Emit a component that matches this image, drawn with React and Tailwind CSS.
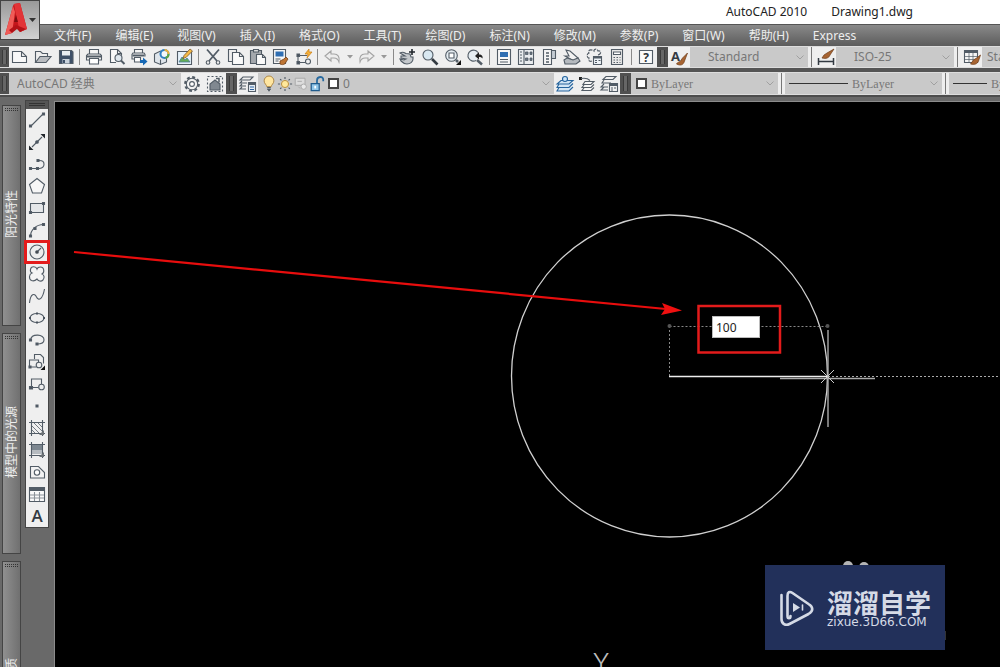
import { clsx } from "clsx";

const MENUS = [
  "文件(F)", "编辑(E)", "视图(V)", "插入(I)", "格式(O)", "工具(T)", "绘图(D)",
  "标注(N)", "修改(M)", "参数(P)", "窗口(W)", "帮助(H)", "Express",
];

// every icon is drawn on an 18 x 18 grid
const ICONS = {
  new: <path d="M1.5 3.5h9l5 5v6h-14zM10.5 3.5v5h5" fill="#f8f8f8" />,
  open: (
    <>
      <path d="M1.5 14.500v-11h5l2 2h5v3" fill="#eee" />
      <path d="M1.500 14.500l4.500-6h11l-5 6z" fill="#b9bcc0" />
    </>
  ),
  save: (
    <>
      <path d="M2.500 2.500h12l1.500 1.500v11.500h-13.500z" fill="#3e5068" />
      <path d="M5 3h8v4.500h-8z" fill="#e8edf2" stroke="none" />
      <path d="M5.500 11h7v4.500h-7z" fill="#c9d2dc" stroke="none" />
      <path d="M7 12v3" stroke="#3e5068" strokeWidth="2" />
    </>
  ),
  print: (
    <>
      <path d="M4.500 6v-4.500h9v4.500M4.500 12h-3v-4.500l1.500-1.500h12l1.500 1.500v4.500h-3" fill="#f5f5f5" />
      <path d="M4.500 10.500h9v5.500h-9z" fill="#fff" />
      <path d="M2 8.500h14" strokeWidth="2" />
    </>
  ),
  preview: (
    <>
      <path d="M8 14.500h-5.500v-13h7l4 4v2" fill="#f8f8f8" />
      <path d="M9.500 1.500v4h4" />
      <circle cx="10.500" cy="10" r="3.500" fill="#dfe7ee" />
      <path d="M13 12.500l3.500 3.500" strokeWidth="2" />
    </>
  ),
  publish: (
    <>
      <path d="M4.500 5v-3.500h8v3.500M4 11h-2v-4.500l1-1.500h11l1 1.500v2" fill="#f5f5f5" />
      <path d="M4.500 9.500h6v4.500h-6z" fill="#fff" />
      <path d="M2.500 7.500h12" strokeWidth="2" />
      <path d="M10 12h3v-2.500l4.500 4-4.500 4v-2.500h-3z" fill="#1769b5" stroke="none" />
    </>
  ),
  dwf: (
    <>
      <path d="M1.500 6l6-3 6 3v8l-6 2.500-6-2.500z" fill="#dfe5eb" />
      <path d="M7.500 16.500v-5" />
      <circle cx="11.500" cy="6" r="4" stroke="#2f7fc4" strokeWidth="2" fill="#f2f7fb" />
      <path d="M11.500 2a4 4 0 014 4" stroke="#efb23a" strokeWidth="2" />
      <path d="M15.500 6a4 4 0 01-3 4" stroke="#5ba746" strokeWidth="2" />
    </>
  ),
  sheet: (
    <>
      <path d="M1.500 3.500h14v13h-14z" fill="#e6f2fa" />
      <path d="M3 14l3-5 3 3 2-2 3 4z" fill="#62ad55" stroke="#4c7a9c" strokeWidth=".8" />
      <path d="M7 10.500l1-3 6-6.500 2.500 2-6.500 6.500z" fill="#f5ba45" stroke="#7a5629" strokeWidth=".8" />
    </>
  ),
  cut: (
    <>
      <path d="M3 1.500l10 11.500M15 1.500l-10 11.500" strokeWidth="1.800" />
      <circle cx="4" cy="14.500" r="1.800" />
      <circle cx="14" cy="14.500" r="1.800" />
    </>
  ),
  copy: (
    <>
      <path d="M1.500 13.500v-12h8v12z" fill="#eee" />
      <path d="M5.500 4.500h7l4 4v8h-11z" fill="#fafafa" />
      <path d="M12.500 4.500v4h4" />
    </>
  ),
  paste: (
    <>
      <path d="M1.500 2.500h11v13h-11z" fill="#a4a8ad" />
      <path d="M4.500 1.500h5v2.500h-5z" fill="#ddd" />
      <path d="M7.500 6.500h6l3 3v7h-9z" fill="#fafafa" />
      <path d="M13.500 6.500v3h3" />
    </>
  ),
  match: (
    <>
      <path d="M1.500 1.500h12v14h-12z" fill="#f7f7f7" />
      <path d="M3.500 3.500h8v5h-8z" fill="#2f6eb2" stroke="none" />
      <path d="M3.500 11h5M3.500 13h3" />
      <path d="M8 13l4-2 2-2 2 2-2 3c-1 3-4 3-6 2z" fill="#bd7433" stroke="#754017" strokeWidth=".8" />
    </>
  ),
  block: (
    <>
      <path d="M3 15.500v-8h9M3 14.500h8" />
      <path d="M2 6h2.500v2.500h-2.500zM2 13.500h2.500v2.500h-2.500z" fill="#48525d" />
      <circle cx="13" cy="13.500" r="2.500" fill="#eee" />
      <path d="M14 1l-4 5h3l-1 4 5-6h-3z" fill="#f7b238" stroke="#c87d16" strokeWidth=".7" />
    </>
  ),
  undo: <path d="M2 8l6-5v3h3c4 0 6 3 5 8-1-3-2-4-5-4h-3v3z" stroke="#a4a4a4" fill="#ededed" />,
  redo: <path d="M16 8l-6-5v3h-3c-4 0-6 3-5 8 1-3 2-4 5-4h3v3z" stroke="#a4a4a4" fill="#ededed" />,
  pan: (
    <>
      <path d="M2 5c3-2 5 0 6 .5l4 .5 1 3 2 0v2c0 3-3 5-6 5-3 0-4-1-6-3l-1-2 4 1 2-1-5-1v-2h4z" fill="#c4c8cc" />
      <path d="M14 1v6M11 4h6" stroke="#20262c" strokeWidth="1.600" />
    </>
  ),
  zoom: (
    <>
      <circle cx="7" cy="7" r="5" fill="#d9e8f1" />
      <path d="M11 11l5.500 5.500" stroke="#343b42" strokeWidth="2.600" />
    </>
  ),
  zoomWindow: (
    <>
      <circle cx="7.500" cy="7.500" r="5.800" fill="#e6edf2" />
      <path d="M5 5h5v5h-5z" fill="#fff" />
      <path d="M12 12l2 2" strokeWidth="2.500" />
      <path d="M17 12v5h-5z" fill="#111" stroke="none" />
    </>
  ),
  zoomPrev: (
    <>
      <path d="M10 12.500a5.500 5.500 0 112-8" fill="#e6edf2" />
      <path d="M11 12l5 4.500" strokeWidth="2.500" />
      <path d="M9 8l4-4v2.500c3 0 4 2 3.500 4-1-1.500-2-1.500-3.500-1.500v2.500z" fill="#222" stroke="none" />
    </>
  ),
  props: (
    <>
      <path d="M2.500 1.500h13v15h-13z" fill="#f7f7f7" />
      <path d="M5 4h8v5h-8z" fill="#2f6eb2" stroke="none" />
      <path d="M5 11.500h8M5 14h8" />
    </>
  ),
  center: (
    <>
      <path d="M1.500 1.500h15v15h-15zM7 2v14" fill="#e9ecef" />
      <path d="M3 4h2M3 7h2M3 10h2M3 13h2" />
      <path d="M8.500 4h2.500v2.500h-2.500zM13 4h2v2.500h-2zM8.500 10h2.500v2.500h-2.500zM13 10h2v2.500h-2z" fill="#697683" strokeWidth=".8" />
    </>
  ),
  palettes: (
    <>
      <path d="M3.500 1.500h8v15h-8z" fill="#f5f5f5" />
      <path d="M11.500 2.500h4v8h-4z" fill="#c5ccd3" />
      <path d="M6 5h3M6 8h3M6 11h3M6 14h3" strokeWidth="1.500" />
    </>
  ),
  sheets: (
    <>
      <path d="M3 2l4 1 8 7-4 3-9-5 4 0z" fill="#f2f2f2" />
      <path d="M1 12l3-2 6 2 5-2 2 3-4 3h-11z" fill="#b5babf" />
    </>
  ),
  markup: (
    <>
      <path d="M13 7c4-1 3-5 0-4-1-3-4-2-4 0-2-2-7-1-5 2-3 1-2 5 0 5-1 3 1 4 3 3" strokeDasharray="4 1" />
      <path d="M8.500 8.500h8v8h-8z" fill="#edf2f6" />
      <path d="M8.500 9.500h8" strokeWidth="2" />
      <path d="M10 12.500h2M13.500 12.500h2M10 14.500h2" />
    </>
  ),
  calc: (
    <>
      <path d="M3.500 1.500h11v15h-11z" fill="#e8e8e8" />
      <path d="M5.500 4h7v2.500h-7z" fill="#fff" />
      <path d="M5.500 9.500h1.500M8.500 9.500h1.500M11.500 9.500h1M5.500 12h1.500M8.500 12h1.500M11.500 12h1M5.500 14.500h1.500M8.500 14.500h1.500M11.500 14.500h1" />
    </>
  ),
  help: (
    <>
      <path d="M2.500 2.500h13v13h-13z" fill="#fafafa" />
      <text x="9" y="13.500" textAnchor="middle" stroke="none" fill="#2d343b" className="font-['Open_Sans',sans-serif] text-[12px] font-bold">?</text>
    </>
  ),
  textStyle: (
    <>
      <text x="1" y="13" stroke="none" fill="#333a42" className="font-['Open_Sans',sans-serif] text-[13px] font-bold">A</text>
      <path d="M17.500 5l-5 5-2 3c-1 1-3 1-4 3 4 2 7 1 8-3z" fill="#a76432" stroke="#6e3c18" strokeWidth=".7" />
    </>
  ),
  dimStyle: (
    <>
      <path d="M1.500 10v7M16.500 10v7M2 13.500h14" stroke="#333a42" strokeWidth="1.500" />
      <path d="M17 1l-7 4-3 2-2 3c4 1 7 0 8-3z" fill="#a76432" stroke="#6e3c18" strokeWidth=".7" />
    </>
  ),
  tableStyle: (
    <>
      <path d="M1.500 2.500h13v12h-13z" fill="#f5f5f5" />
      <path d="M2 4h12" strokeWidth="2" />
      <path d="M1.500 8.500h13M1.500 11.500h13M6 5v9M10 5v9" strokeWidth=".7" />
      <path d="M17.500 7l-4 3-3 2-3 4c4 1 7 0 8-3z" fill="#a76432" stroke="#6e3c18" strokeWidth=".7" />
    </>
  ),
  gear: (
    <>
      <circle cx="9" cy="9" r="6.800" strokeWidth="2.200" strokeDasharray="2.900 2.440" />
      <circle cx="9" cy="9" r="5.700" fill="#f1f1f1" />
      <circle cx="9" cy="9" r="2.400" fill="#fff" />
    </>
  ),
  workspace: (
    <>
      <path d="M1.500 1.500h15v15h-15z" strokeDasharray="2 2" />
      <path d="M4 15v-6l5-4 5 4v6z" fill="#808890" />
      <path d="M10 3.500h3v4" strokeWidth="1.500" />
    </>
  ),
  layers: (
    <>
      <path d="M4 2h10l-3 3h-10zM3 6l-2 2h7M3 9l-2 2h6M3 12l-2 2h6" />
      <path d="M9.500 7.500h7v9h-7z" fill="#e9f0f6" />
      <path d="M9.500 9h7" strokeWidth="2" />
      <path d="M11 12h4M11 14.500h4" stroke="#2c62a0" />
    </>
  ),
  layerCurrent: (
    <>
      <path d="M5 5.500h12l-4 3.500h-12zM3 9l-2 3.500h12l4-4M3 12.500l-2 3.500h12l4-4" stroke="#26649d" fill="#d2e5f4" />
      <circle cx="9" cy="4" r="2.500" stroke="#26649d" fill="#cde6fa" />
    </>
  ),
  layerPrev: (
    <>
      <path d="M7 6.500h9l-3 3h-8zM6 10l-2 2.500h9l3-3M6 13l-2 2.500h9l3-3" fill="#f5f5f5" />
      <path d="M1 2h3v3h-3z" fill="#222" stroke="none" />
      <path d="M3 3.500c5-1 7 0 9 2" />
    </>
  ),
  layerState: (
    <>
      <path d="M6 1.500h10l-3 3h-10zM4 5l-2 3h9M4 9l-3 3h7M4 12l-3 3h7" />
      <path d="M9.500 8.500h8v8h-8z" fill="#f1f1f1" />
      <path d="M9.500 10h8" strokeWidth="2" />
      <path d="M11 13h2M14 13h2M11 15h2" />
    </>
  ),
  bulb: (
    <>
      <path d="M6.500 12c0-2-3-3.500-3-6.500a5 5 0 0111-0c0 3-3 4.500-3 6.500z" fill="#ffe6a0" stroke="#ad8645" />
      <path d="M7 13h4M7 15h4M8 16.500h2" strokeWidth="1.500" />
    </>
  ),
  sun: (
    <>
      <circle cx="9" cy="9" r="4" fill="#ffe89b" stroke="#b98e3e" />
      <path d="M9 1v2.500M9 14.500v2.500M1 9h2.500M14.500 9h2.500M3.500 3.500l1.500 1.500M13 13l1.500 1.500M14.500 3.500l-1.500 1.500M5 13l-1.500 1.500" strokeWidth="1.300" />
    </>
  ),
  freeze: (
    <>
      <path d="M2.500 2.500h11v8h-11z" fill="#dcdcdc" stroke="#aaa" />
      <circle cx="12" cy="12" r="3" fill="#e9e9e9" stroke="#aaa" />
      <path d="M6 12l2 2M5 6h5" stroke="#aaa" />
    </>
  ),
  unlock: (
    <>
      <path d="M9 8v-3c0-5 7-5 7-1v2" stroke="#286a9f" strokeWidth="2" />
      <path d="M2.500 8.500h9v8h-9z" fill="#8fc5e8" stroke="#205c8d" strokeWidth="1.400" />
      <path d="M7 11v3" stroke="#fff" strokeWidth="2" />
    </>
  ),
  line: (
    <>
      <path d="M3 15l12-12" />
      <path d="M1.500 14h2v2h-2zM14.500 2h2v2h-2z" fill="#48525d" />
    </>
  ),
  xline: (
    <>
      <path d="M4 14l10-10" />
      <path d="M1 17v-4.500l4.500 4.500zM17 1v4.500l-4.500-4.500z" fill="#22272c" stroke="none" />
      <circle cx="9" cy="9" r="1.300" fill="#48525d" />
    </>
  ),
  pline: (
    <>
      <path d="M2.500 13.500h9c6-1 6-8 0-8h-1" />
      <path d="M1.500 12.500h2v2h-2zM8.500 12.500h2v2h-2zM9 4.500h2v2h-2z" fill="#48525d" />
    </>
  ),
  polygon: <path d="M9 1.500l7.500 6-3 8.500h-9l-3-8.500z" fill="#f7f7f7" />,
  rect: (
    <>
      <path d="M2.500 4.500h13v9h-13z" fill="#e5e7e9" />
      <path d="M1.500 12.500h2v2h-2zM14.500 3.500h2v2h-2z" fill="#48525d" />
    </>
  ),
  arc: (
    <>
      <path d="M2.500 15.500c0-7 6-12 13-12" />
      <path d="M1.500 14h2v2h-2zM6 6.500h2v2h-2zM14.500 2.500h2v2h-2z" fill="#48525d" />
    </>
  ),
  circle: (
    <>
      <circle cx="9" cy="9" r="7" fill="#ededed" />
      <path d="M9 9l4-4" />
      <circle cx="9" cy="9" r="1.300" fill="#333" />
    </>
  ),
  cloud: <path d="M9 4c-1-3-6-3-6.500 .5-.5 2 .5 3 1.500 3.500-3 1-3.500 6-.5 7.500 2.500 1 4.500-.5 5.500-1.500 1 2 4 3 6 1 2-2.500 1-5-1-6 3-2 2-7-1.500-7-1.500 0-3 .5-3.500 2z" fill="#f4f4f4" />,
  spline: <path d="M1.500 16c1-10 5-10 7-6s6 3 8-8" />,
  ellipse: (
    <>
      <ellipse cx="9" cy="9" rx="7" ry="4.500" />
      <path d="M8 3.500h2v2h-2zM1 8h2v2h-2zM15 8h2v2h-2zM8 12.500h2v2h-2z" fill="#48525d" stroke="none" />
    </>
  ),
  ellipseArc: (
    <>
      <path d="M2.500 9c1-7 14-6 13.500 0 0 3-4 4-7 4" />
      <path d="M1.500 8h2v2h-2zM8 12h2v2h-2z" fill="#48525d" />
    </>
  ),
  insert: (
    <>
      <path d="M6.500 6v-4.500h6l3 3v6M1.500 14v-7h9v4M1.500 14h7" />
      <circle cx="11" cy="12" r="2.800" fill="#eee" />
      <path d="M17 12.500v4.500h-4.500z" fill="#111" stroke="none" />
      <path d="M1 13h2v2h-2z" fill="#48525d" />
    </>
  ),
  makeBlock: (
    <>
      <path d="M3.500 13v-9h10v5M3.500 12.500h7" />
      <circle cx="13.500" cy="12" r="2.800" fill="#eee" />
      <path d="M1.500 11.500h3v2.500h-3z" fill="#48525d" />
    </>
  ),
  point: <path d="M8 8h2v2h-2z" fill="#48525d" />,
  hatch: (
    <>
      <path d="M3.500 1v16M14.500 1v16M1 3.500h16M1 14.500h16" />
      <path d="M4 7l7 7M4 11l3 3M6 4l8 8M10 4l4 4" strokeWidth=".8" />
      <path d="M16 11v5h-5z" fill="#6d7276" stroke="none" />
    </>
  ),
  gradient: (
    <>
      <path d="M4 4h10v5h-10z" fill="#7d8790" stroke="none" />
      <path d="M4 9h10v4h-10z" fill="#b6bbc0" stroke="none" />
      <path d="M3.500 1v16M14.500 1v16M1 3.500h16M1 14.500h16" />
      <path d="M16 11v5h-5z" fill="#6d7276" stroke="none" />
    </>
  ),
  region: (
    <>
      <path d="M2.500 3.500h8l6 6v5.500h-14z" fill="#f2f2f2" />
      <circle cx="9" cy="9.500" r="2.700" fill="#fff" />
    </>
  ),
  table: (
    <>
      <path d="M1.500 2.500h15v14h-15z" fill="#fafafa" />
      <path d="M2 4.500h14" strokeWidth="3" />
      <path d="M2 10h14M2 13h14M6.500 7v9M11.500 7v9" stroke="#8b9299" />
    </>
  ),
  mtext: (
    <text x="9" y="14.500" textAnchor="middle" stroke="none" fill="#333a42" className="font-['Open_Sans',sans-serif] text-[17px] font-semibold">A</text>
  ),
};

// "|" is a separator, "v" a drop-down arrow
const STANDARD_TOOLS = [
  "new", "open", "save", "|", "print", "preview", "publish", "dwf", "sheet", "|",
  "cut", "copy", "paste", "match", "block", "|", "undo", "v", "redo", "v", "|",
  "pan", "zoom", "zoomWindow", "zoomPrev", "|",
  "props", "center", "palettes", "sheets", "markup", "calc", "|", "help",
];

const DRAW_TOOLS = [
  "line", "xline", "pline", "polygon", "rect", "arc", "circle", "cloud", "spline", "ellipse",
  "ellipseArc", "insert", "makeBlock", "point", "hatch", "gradient", "region", "table", "mtext",
];

const PALETTES = ["阳光特性", "模型中的光源", "材质"];

function Icon({ name, className = "size-[18px]" }) {
  return (
    <svg viewBox="0 0 18 18" fill="none" stroke="#525c66" strokeWidth="1.1" className={clsx("shrink-0 overflow-visible", className)} aria-hidden="true">
      {ICONS[name]}
    </svg>
  );
}

function ToolButton({ name, className = "min-w-0 flex-1" }) {
  return (
    <button type="button" aria-label={name} className={clsx("flex items-center justify-center", className)}>
      <Icon name={name} />
    </button>
  );
}

function Grip({ className = "w-[11px]" }) {
  return (
    <div className={clsx("flex shrink-0 justify-center bg-[#505050] py-[3px]", className)}>
      <div className="w-[5px] border-x border-[#3a3a3a] bg-[#666]" />
    </div>
  );
}

function Divider() {
  return (
    <div className="flex w-[7px] shrink-0 justify-center bg-[#eee]">
      <div className="w-px bg-[#777]" />
    </div>
  );
}

function Combo({ label, value, className, selectClass = "", children, arrow = true }) {
  return (
    <div className={clsx("flex shrink-0 items-center overflow-hidden bg-[#c9c9c9]", className)}>
      {children}
      <select aria-label={label} className={clsx("h-full min-w-0 flex-1 appearance-none bg-transparent text-[12px] text-[#777] outline-none", selectClass)}>
        <option>{value}</option>
      </select>
      {arrow && (
        <svg viewBox="0 0 8 5" fill="none" stroke="#a0a0a0" className="mr-1 h-[5px] w-2 shrink-0" aria-hidden="true">
          <path d="M.5 .5l3.500 3.500 3.500-3.500" />
        </svg>
      )}
    </div>
  );
}

function StandardBar() {
  return (
    <div className="flex h-[22px] overflow-hidden border-y border-[#ddd] bg-[#efefef]">
      <Grip className="w-[9px]" />
      <div className="flex w-[648px] shrink-0">
        {STANDARD_TOOLS.map((t, i) => {
          if (t === "|") {
            return (
              <div key={i} className="flex w-[6px] shrink-0 justify-center py-[2px]">
                <div className="w-px bg-[#8a8a8a]" />
              </div>
            );
          }
          if (t === "v") {
            return (
              <button key={i} type="button" aria-label="More" className="flex w-3 shrink-0 items-center justify-center">
                <svg viewBox="0 0 6 4" className="h-1 w-[6px]"><path d="M0 0h6l-3 3.500z" fill="#999" /></svg>
              </button>
            );
          }
          return <ToolButton key={i} name={t} />;
        })}
      </div>
      <Grip />
      <ToolButton name="textStyle" className="w-[22px] shrink-0" />
      <Combo label="Text style" value="Standard" className="w-[118px]" selectClass="pl-[18px]" />
      <Divider />
      <ToolButton name="dimStyle" className="w-[21px] shrink-0" />
      <Combo label="Dimension style" value="ISO-25" className="w-[118px]" selectClass="pl-[18px]" />
      <Divider />
      <ToolButton name="tableStyle" className="w-[21px] shrink-0" />
      <Combo label="Table style" value="Standard" className="min-w-0 flex-1" selectClass="pl-[5px]" arrow={false} />
    </div>
  );
}

function LayerBar() {
  const serif = "font-['Liberation_Serif',serif] pl-1";
  return (
    <div className="flex h-[23px] overflow-hidden border-y border-[#ddd] bg-[#efefef]">
      <Grip className="w-[9px]" />
      <Combo label="Workspace" value="AutoCAD 经典" className="w-[172px]" selectClass="pl-2" />
      <ToolButton name="gear" className="w-[22px] shrink-0" />
      <ToolButton name="workspace" className="w-[23px] shrink-0" />
      <Grip />
      <ToolButton name="layers" className="w-[21px] shrink-0" />
      <Combo label="Layer" value="0" className="w-[296px] pl-[3px]" selectClass="pl-1">
        <Icon name="bulb" className="size-4" />
        <Icon name="sun" className="size-4" />
        <Icon name="freeze" className="size-4" />
        <Icon name="unlock" className="size-4" />
        <div className="ml-[3px] size-[11px] shrink-0 border-2 border-[#444] bg-white" />
      </Combo>
      <ToolButton name="layerCurrent" className="w-[22px] shrink-0" />
      <ToolButton name="layerPrev" className="w-[22px] shrink-0" />
      <ToolButton name="layerState" className="w-[22px] shrink-0" />
      <Grip />
      <Combo label="Color" value="ByLayer" className="w-[147px] pl-[5px]" selectClass={serif}>
        <div className="size-[11px] shrink-0 border-2 border-[#444] bg-white" />
      </Combo>
      <Divider />
      <Combo label="Linetype" value="ByLayer" className="w-[157px] pl-1" selectClass={serif}>
        <div className="h-px w-[59px] shrink-0 bg-[#333]" />
      </Combo>
      <Divider />
      <Combo label="Lineweight" value="ByLayer" className="min-w-0 flex-1 pl-1" selectClass={serif} arrow={false}>
        <div className="h-px w-[34px] shrink-0 bg-[#333]" />
      </Combo>
    </div>
  );
}

function Header() {
  return (
    <header className="relative shrink-0 bg-[#555]">
      <div className="flex h-6 items-center justify-end gap-6 bg-white pr-[87px] text-[12px] text-[#222]">
        <span>AutoCAD 2010</span>
        <span>Drawing1.dwg</span>
      </div>
      <nav className="flex h-[22px] items-center gap-6 border-t border-[#555] bg-gradient-to-b from-[#8a8a8a] to-[#5c5c5c] pl-[54px] text-[12px] whitespace-nowrap text-[#eee]">
        {MENUS.map((m) => (
          <button key={m} type="button">{m}</button>
        ))}
      </nav>
      <StandardBar />
      <div className="h-1 bg-[#555]" />
      <LayerBar />
      <button type="button" aria-label="Application menu" className="absolute top-0 left-0 size-10 border border-[#444] bg-gradient-to-b from-[#999] to-[#d2d2d2]">
        <svg viewBox="0 0 38 38" className="size-full">
          <path d="M4 34l8-29 1-2 6-1 7 26-7 3-2-6-4 1-2 6z" fill="#c4161b" />
          <path d="M13 3l6-1 7 26-7 3-4-17z" fill="#e23437" />
          <path d="M4 34l8-29 2 6-3 21z" fill="#f05b57" />
          <path d="M13 21l2-7 2 7z" fill="#7c0d10" />
          <path d="M8 29l7-5 10 4-6 3-3-3-5 4z" fill="#b31217" />
          <path d="M28 17h7l-3.500 4z" fill="#333" />
        </svg>
      </button>
    </header>
  );
}

function PaletteRail() {
  return (
    <aside className="ml-[2px] flex w-[19px] shrink-0 flex-col gap-[7px] pt-2">
      {PALETTES.map((p) => (
        <button key={p} type="button" className="flex h-[221px] shrink-0 flex-col items-center border border-[#444] bg-gradient-to-r from-[#909090] to-[#707070] pt-[2px] pb-2">
          <span className="h-[3px] w-[13px] border-y border-dotted border-[#333]" />
          <span className="flex flex-1 rotate-180 items-center justify-center text-[12px] leading-4 text-[#eee] [text-orientation:sideways] [writing-mode:vertical-rl]">
            {p}
          </span>
        </button>
      ))}
    </aside>
  );
}

function DrawToolbar() {
  return (
    <div className="mt-[3px] ml-1 w-6 shrink-0 self-start border border-[#444] bg-[#efefef]">
      <div className="flex h-2 flex-col items-center bg-[#555] pt-[2px]">
        <div className="h-[3px] w-4 border-y border-[#333]" />
      </div>
      {DRAW_TOOLS.map((t) => (
        <div key={t} className="relative">
          <ToolButton name={t} className="h-[22px] w-full" />
          {t === "circle" && <div className="pointer-events-none absolute -inset-x-[2px] -inset-y-px border-3 border-[#e31b1b]" />}
        </div>
      ))}
    </div>
  );
}

function Watermark() {
  return (
    <div className="absolute top-[463px] left-[710px] flex h-[85px] w-[180px] items-center gap-3 bg-[#22305a] pl-[14px] text-[#d5dae6]">
      <svg viewBox="0 0 36 38" fill="none" stroke="currentColor" strokeWidth="2.6" strokeLinecap="round" className="h-[38px] w-9 shrink-0">
        <path d="M2.500 6v24c0 5 4 7 8 5l19-10c5-3 5-7 0-10l-16-11c-3-2-5-1-5 3v20c0 3 3 3 3 0" />
        <path d="M14 14v9l7-4.500z" fill="currentColor" stroke="none" />
        <path d="M23.500 16v5" strokeWidth="1.600" />
      </svg>
      <div className="whitespace-nowrap">
        <div className="font-['Noto_Sans_CJK_SC',sans-serif] text-[26px] leading-7 font-bold">溜溜自学</div>
        <div className="font-['DejaVu_Sans',sans-serif] text-[12px] leading-3">zixue.3D66.COM</div>
      </div>
    </div>
  );
}

function Canvas() {
  return (
    <main className="relative mt-[5px] ml-[6px] min-w-0 flex-1 overflow-hidden bg-black outline outline-[#8c8c8c]">
      <svg viewBox="55 102 945 565" width="945" height="565" fill="none" className="block max-w-none">
        <ellipse cx="669.500" cy="376" rx="158" ry="161" stroke="#d0d0d0" strokeWidth="1.300" />
        <path d="M669.500 326.500h158M669.500 326v50" stroke="#888" strokeDasharray="2 2" />
        <path d="M828 376.500h172" stroke="#aaa" strokeDasharray="2 2" />
        <circle cx="669.500" cy="326" r="2" fill="#555" />
        <circle cx="827.500" cy="326" r="2" fill="#555" />
        <path d="M669 376.500h159" stroke="#eee" strokeWidth="1.500" />
        <path d="M780 378.500h95M828 330v97" stroke="#aaa" strokeWidth="1.400" />
        <path d="M821 370l13 13M834 370l-13 13" stroke="#ccc" />
        <path d="M74 252l592 57" stroke="#e80d0d" strokeWidth="2.200" />
        <path d="M682 310.500l-21 4.500 4-6-3-6z" fill="#f01010" />
        <rect x="698.500" y="306" width="81.500" height="46.500" stroke="#e31b1b" strokeWidth="2.500" />
        <text x="601" y="672" textAnchor="middle" fill="#bbb" className="font-['Inter',sans-serif] text-[25px] font-light">Y</text>
        <circle cx="848" cy="566" r="5" fill="#b5b5b5" />
        <circle cx="864" cy="567" r="5" fill="#b5b5b5" />
        <path d="M945.500 631v9" stroke="#333" />
      </svg>
      <input
        aria-label="Radius"
        defaultValue="100"
        className="absolute top-[214px] left-[657px] h-[22px] w-12 border border-[#bbb] bg-white pl-[3px] text-[12px] text-[#222] outline-none"
      />
      <Watermark />
    </main>
  );
}

export default function App() {
  return (
    <div className="flex h-screen flex-col overflow-hidden bg-[#696969] font-['Noto_Sans','Noto_Sans_CJK_SC',sans-serif]">
      <Header />
      <div className="h-[2px] shrink-0 bg-[#4d4d4d]" />
      <div className="flex min-h-0 flex-1">
        <PaletteRail />
        <DrawToolbar />
        <Canvas />
      </div>
    </div>
  );
}
